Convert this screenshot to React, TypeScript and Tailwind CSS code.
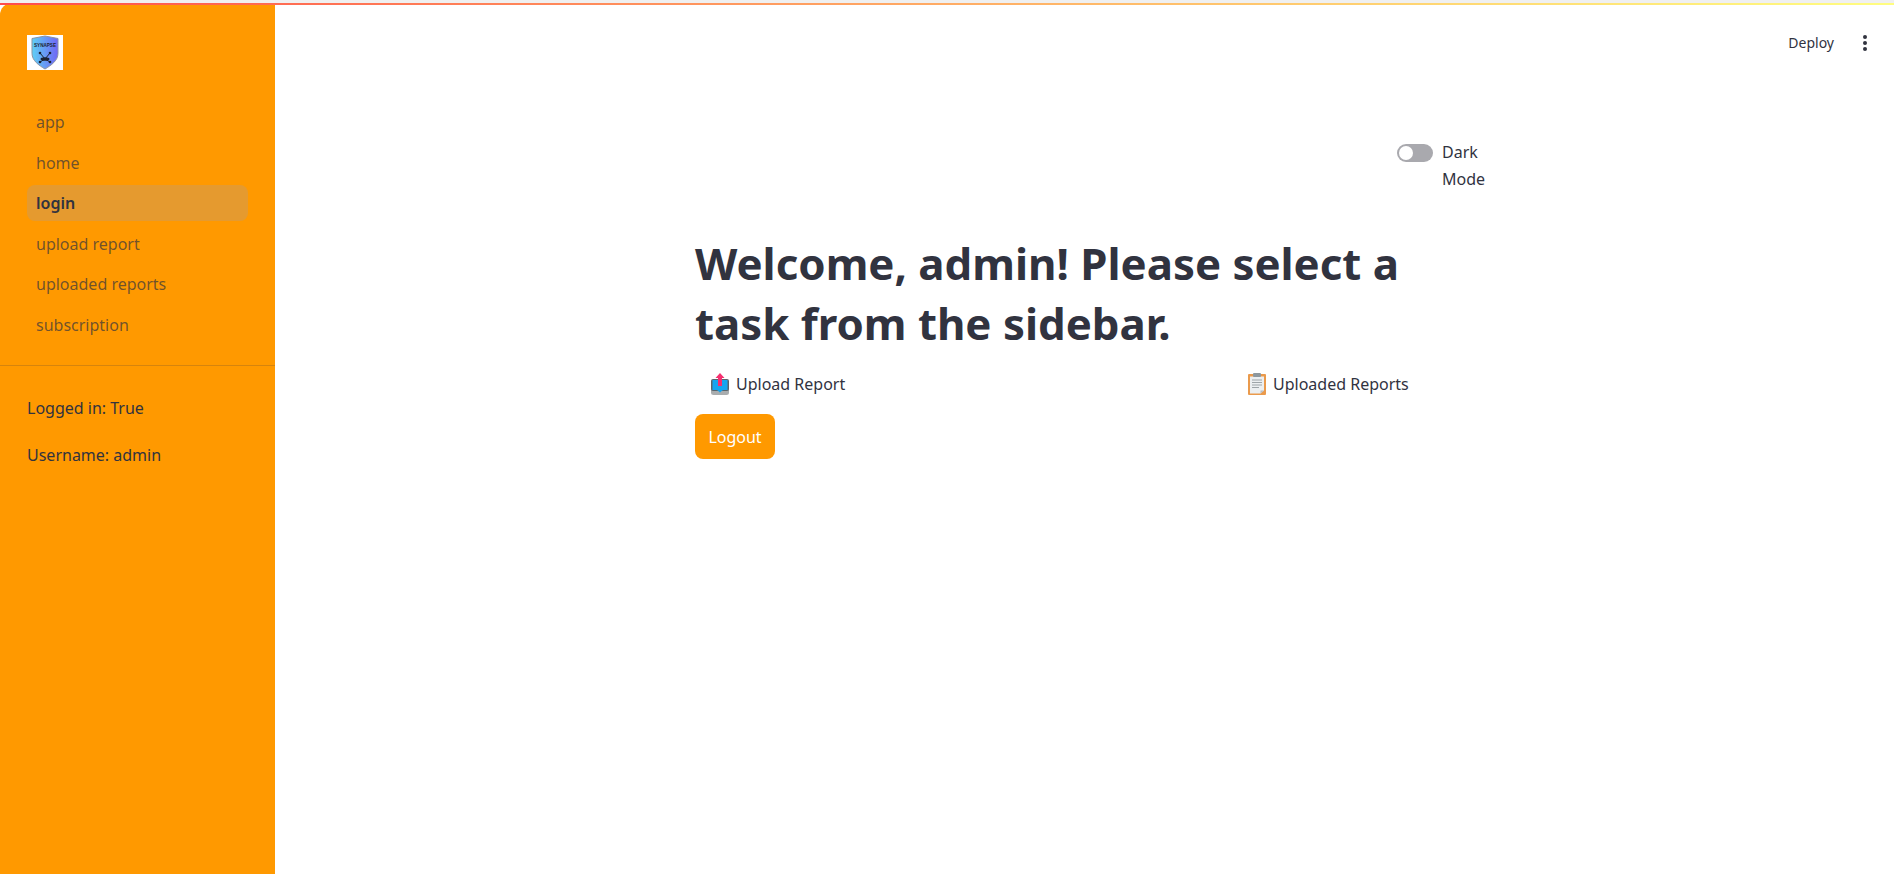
const NAV = ['app', 'home', 'login', 'upload report', 'uploaded reports', 'subscription']

const UploadIcon = () => (
  <svg width="18" height="22" viewBox="0 0 18 22">
    <rect x="0" y="8" width="18" height="14" rx="2.500" fill="#a9adaf" />
    <rect x="0" y="6" width="18" height="12" rx="2" fill="#59666e" />
    <path d="M1.500 7h15v10h-4.500l-3 2.500-3-2.500h-4.500z" fill="#14a5f0" />
    <path d="M9 0l4.500 5h-2.500v8h-4v-8h-2.500z" fill="#f5306f" />
  </svg>
)

const ClipboardIcon = () => (
  <svg width="18" height="22" viewBox="0 0 18 22">
    <rect x="0" y="1" width="18" height="21" rx="1" fill="#ea9a4c" />
    <path d="M2 3.500h14v14l-3.500 3h-10.500z" fill="#eceff1" />
    <path d="M16 17.500l-3.500 3v-3z" fill="#b8bcbf" />
    <rect x="5" y="0" width="8" height="4" rx="1" fill="#8e989e" />
    <path d="M4 7h10M4 9.500h10M4 12h10M4 14.500h7" stroke="#9ea5a9" strokeWidth="1" />
  </svg>
)

const Logo = () => (
  <div className="h-[35px] w-9 bg-white">
    <svg width="36" height="35" viewBox="0 0 36 35">
      <defs>
        <linearGradient id="shield" x1="0" y1="0" x2="1" y2="0">
          <stop offset="0" stopColor="#5fd0f5" />
          <stop offset="1" stopColor="#7066f5" />
        </linearGradient>
      </defs>
      <path d="M18 1l13 2.500v15c0 7-7 12-13 15.500-6-3.500-13-8.500-13-15.500v-15z" fill="url(#shield)" stroke="#8b93a5" />
      <text x="18" y="11.500" textAnchor="middle" fontSize="4.600" fontWeight="700" fill="#1c2333" fontFamily="Liberation Sans, sans-serif">
        SYNAPSE
      </text>
      <path d="M13 18l5 6M23 18l-5 6M13 27l5-3M23 27l-5-3" stroke="#1c2333" strokeWidth="1" />
      <circle cx="13" cy="18" r="1.300" fill="#1c2333" />
      <circle cx="23" cy="18" r="1.300" fill="#1c2333" />
      <circle cx="13" cy="27" r="1.300" fill="#1c2333" />
      <circle cx="23" cy="27" r="1.300" fill="#1c2333" />
      <ellipse cx="18" cy="24" rx="4.500" ry="1.800" fill="#1c2333" />
    </svg>
  </div>
)

const App = () => {
  return (
    <div className="relative flex h-screen w-screen overflow-hidden bg-white pt-[3px] text-[#31333f] font-['Noto_Sans','Liberation_Sans',sans-serif]">
      <div className="absolute inset-x-0 top-0 h-[3px] bg-[#f0f0f0]" />
      <div className="absolute inset-x-0 top-[3px] z-10 h-0.5 bg-linear-to-r from-[#ff4b4b] to-[#fffd80]" />

      <aside className="flex w-[275px] shrink-0 flex-col rounded-tl-xl bg-[#ff9900]">
        <div className="px-[27px] pt-8">
          <Logo />
        </div>
        <nav className="flex flex-col gap-[4.500px] px-[27px] pt-[34px]">
          {NAV.map((item) => (
            <div
              key={item}
              className={
                item === 'login'
                  ? 'flex h-9 items-center rounded-lg bg-[#e59a2f] px-[9px] text-base font-semibold'
                  : 'flex h-9 items-center px-[9px] text-base text-[#31333f]/70'
              }
            >
              {item}
            </div>
          ))}
        </nav>
        <div className="mt-[22px] border-b border-[#31333f]/20" />
        <div className="flex flex-col gap-[23px] px-[27px] pt-[30px] text-base">
          <p>Logged in: True</p>
          <p>Username: admin</p>
        </div>
      </aside>

      <main className="relative flex-1">
        <div className="absolute right-0 top-[30px] flex items-center text-sm">
          <span className="mr-[29px]">Deploy</span>
          <div className="mr-[27px] flex flex-col gap-[2px]">
            <span className="size-1 rounded-full bg-[#31333f]" />
            <span className="size-1 rounded-full bg-[#31333f]" />
            <span className="size-1 rounded-full bg-[#31333f]" />
          </div>
        </div>

        <div className="ml-[420px] w-[799px] pt-[136px]">
          <div className="flex justify-end">
            <div className="flex w-[97px] items-start gap-[9px]">
              <div className="mt-[5px] flex h-[18px] w-9 shrink-0 items-center rounded-full bg-[#a9a9ae] px-[2px]">
                <span className="size-[14px] rounded-full bg-white" />
              </div>
              <span className="text-base leading-[27px]">Dark Mode</span>
            </div>
          </div>

          <h1 className="mt-10 w-[720px] text-[43.800px] leading-[60px] font-bold">
            Welcome, admin! Please select a task from the sidebar.
          </h1>

          <div className="mt-[17px] flex w-[730px] text-base">
            <div className="flex h-7 flex-1 items-center gap-[7px] pl-4">
              <UploadIcon />
              <span>Upload Report</span>
            </div>
            <div className="flex h-7 w-[177px] items-center gap-[7px]">
              <ClipboardIcon />
              <span>Uploaded Reports</span>
            </div>
          </div>

          <button className="mt-4 h-[45px] w-20 rounded-lg bg-[#ff9900] text-base text-white">Logout</button>
        </div>
      </main>
    </div>
  )
}

export default App
